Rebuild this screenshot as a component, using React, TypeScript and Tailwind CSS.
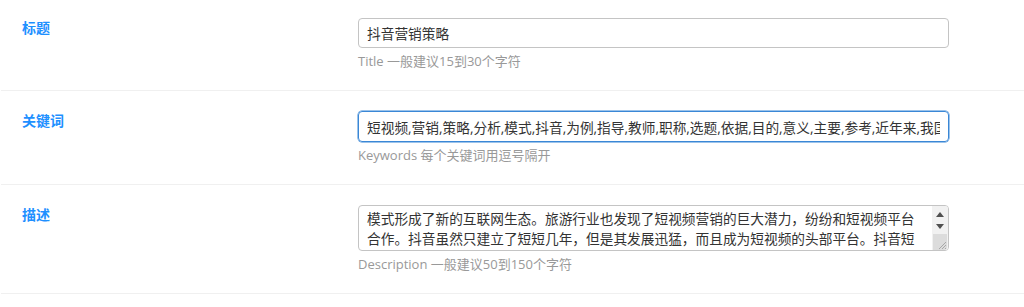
import React from "react";

const font = { fontFamily: '"Open Sans", "Noto Sans CJK SC", sans-serif' };

const keywords =
    "短视频,营销,策略,分析,模式,抖音,为例,指导,教师,职称,选题,依据,目的,意义,主要,参考,近年来,我国,短视频,行业,发展";

const description =
    "模式形成了新的互联网生态。旅游行业也发现了短视频营销的巨大潜力，纷纷和短视频平台合作。抖音虽然只建立了短短几年，但是其发展迅猛，而且成为短视频的头部平台。抖音短视频平台的用户数量持续增长，越来越多的企业开始借助抖音进行品牌推广和产品营销。";

function Row({ label, hint, first, children }: { label: string; hint: string; first?: boolean; children: React.ReactNode }) {
    return (
        <div
            className={`ml-px flex flex-row items-start border-b border-[#f0f0f0] pl-[21px] pb-5 ${first ? "pt-[18px]" : "pt-5"}`}
        >
            <label className="w-[336px] text-sm leading-5 font-bold text-[#1e90ff]">{label}</label>
            <div className="flex w-[591px] flex-col">
                {children}
                <div className="mt-[5px] text-[13px] leading-[17px] text-[#999]">{hint}</div>
            </div>
        </div>
    );
}

// drawn scrollbar, the native one does not show up in headless mode
function FakeScrollbar() {
    return (
        <div className="pointer-events-none absolute top-px right-px bottom-px flex w-4 flex-col rounded-r-[3px] bg-[#f1f1f1]">
            <div className="flex h-3 items-center justify-center pt-1">
                <svg width="8" height="5" viewBox="0 0 8 5">
                    <path d="M0 5 L4 0 L8 5 Z" fill="#505050" />
                </svg>
            </div>
            <div className="flex h-3 items-center justify-center pt-1">
                <svg width="8" height="5" viewBox="0 0 8 5">
                    <path d="M0 0 L8 0 L4 5 Z" fill="#505050" />
                </svg>
            </div>
            <div className="relative mx-px mt-1 flex-1 rounded-br-[3px] bg-[#dcdcdc]">
                <svg className="absolute right-0 bottom-0" width="10" height="10" viewBox="0 0 10 10">
                    <path d="M9 2 L2 9 M9 5 L5 9 M9 8 L8 9" stroke="#a8a8a8" strokeWidth="1" />
                </svg>
            </div>
        </div>
    );
}

export default function App() {
    return (
        <main className="min-h-[307px] w-full bg-white" style={font}>
            <Row label="标题" hint="Title 一般建议15到30个字符" first>
                <input
                    type="text"
                    defaultValue="抖音营销策略"
                    className="h-[30px] w-full rounded-[4px] border border-[#c4c4c4] px-2 text-[13.7px] text-[#333] outline-none"
                    style={font}
                />
            </Row>
            <Row label="关键词" hint="Keywords 每个关键词用逗号隔开">
                <input
                    type="text"
                    defaultValue={keywords}
                    className="h-[31px] w-full rounded-[4px] border border-[#3a87d6] px-2 text-[13.7px] text-[#333] shadow-[0_0_0_0.5px_#3a87d6] outline-none"
                    style={font}
                />
            </Row>
            <Row label="描述" hint="Description 一般建议50到150个字符">
                <div className="relative w-full">
                    <textarea
                        defaultValue={description}
                        className="block h-[46px] w-full resize-none overflow-y-hidden rounded-[4px] border border-[#c4c4c4] pt-[3px] pr-5 pl-2 text-[13.7px] leading-5 text-[#333] outline-none"
                        style={font}
                    />
                    <FakeScrollbar />
                </div>
            </Row>
        </main>
    );
}
